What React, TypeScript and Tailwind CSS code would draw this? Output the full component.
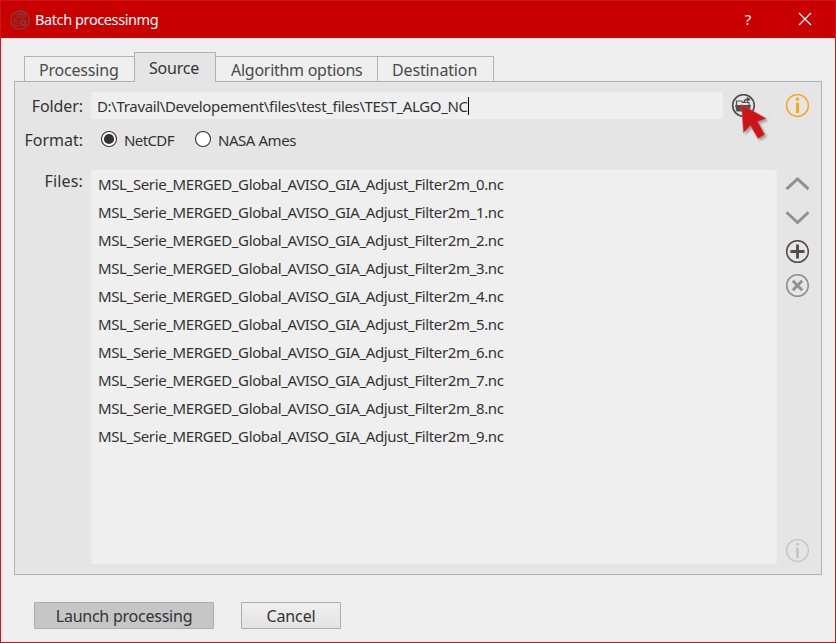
import React from "react";

const files = Array.from({ length: 10 }, (_, i) => `MSL_Serie_MERGED_Global_AVISO_GIA_Adjust_Filter2m_${i}.nc`);

function AppLogo() {
  return (
    <svg width="20" height="20" viewBox="0 0 20 20" fill="none" stroke="#774040" strokeWidth="1">
      <circle cx="10" cy="10" r="9.3" strokeWidth="1.4" />
      <path d="M10 15.500H4.500V9L6.500 7H11.500V9M7 6.500V4.500H13.500V8M9 4V2.800H15V8M6.500 9.500H4.500M6.500 11.500H9M6.500 13.500H8.500" />
      <circle cx="13" cy="12.500" r="2.300" strokeWidth="1.800" />
      <path d="M13 9V10M13 15V16M9.500 12.500H10.500M15.500 12.500H16.500M10.500 10L11.300 10.800M14.700 14.200L15.500 15M15.500 10L14.700 10.800M10.500 15L11.300 14.200" />
    </svg>
  );
}

function InfoIcon({ color }: { color: string }) {
  return (
    <svg className="block" width="24" height="24" viewBox="0 0 24 24">
      <circle cx="12.500" cy="11.500" r="10.900" fill="none" stroke={color} strokeWidth="1.500" />
      <circle cx="12.500" cy="5.200" r="1.600" fill={color} />
      <path d="M11 8.700H14V19H11Z" fill={color} />
    </svg>
  );
}

function FolderIcon() {
  return (
    <svg className="block" width="24" height="24" viewBox="0 0 24 24">
      <circle cx="12.500" cy="11.500" r="10.800" fill="none" stroke="#505050" strokeWidth="1.700" />
      <path d="M5.500 11V7H10.500L11.500 8.500H18V11" fill="none" stroke="#505050" strokeWidth="1.200" />
      <path d="M4 11H20L18.500 17.500H5.500Z" fill="#505050" />
      <path d="M13 8C13.500 6 15 5.300 17 5.300M15.800 3.500L18.300 5.300L16 7.500" fill="none" stroke="#505050" strokeWidth="1.500" />
    </svg>
  );
}

function Pointer() {
  return (
    <svg className="absolute left-[10px] top-[10px] drop-shadow-[2px_2px_1px_rgba(0,0,0,0.3)]" width="30" height="40" viewBox="0 0 30 40">
      <path d="M0.500 0.500L25 14.500L16.500 17.500L23.500 30.500L17 34.500L9.500 21.500L2.500 28.500Z" fill="#cb1517" stroke="#d84b4b" strokeWidth="0.6" />
    </svg>
  );
}

function Chevron({ up }: { up?: boolean }) {
  return (
    <svg className="block" width="24" height="14" viewBox="0 0 24 14">
      <path d={up ? "M1.500 12.100L12.500 1.900L23.500 12.100" : "M1.500 1.200L12.500 11.500L23.500 1.200"} fill="none" stroke="#909090" strokeWidth="2.900" />
    </svg>
  );
}

function RoundAction({ remove }: { remove?: boolean }) {
  const c = remove ? "#909090" : "#514d4d";
  return (
    <svg className="block" width="24" height="24" viewBox="0 0 24 24" fill="none" stroke={c}>
      <circle cx="12.500" cy="11.500" r="10.800" strokeWidth="1.600" />
      <path d={remove ? "M7.800 6.800L17.200 16.200M17.200 6.800L7.800 16.200" : "M12.500 4.500V18.500M5.500 11.500H19.500"} strokeWidth="2.900" />
    </svg>
  );
}

function Radio({ checked }: { checked?: boolean }) {
  return (
    <svg className="block shrink-0" width="17" height="17" viewBox="0 0 17 17">
      <circle cx="8" cy="8" r="7.500" fill="#fff" stroke="#333" strokeWidth="1.100" />
      {checked && <circle cx="8" cy="8" r="5.100" fill="#333" />}
    </svg>
  );
}

export default function App() {
  return (
    <div className="flex h-[643px] w-[836px] flex-col overflow-hidden border border-[#cd1518] bg-[#efefef] font-['Noto_Sans',sans-serif] text-[16px] leading-[20px] whitespace-nowrap text-[#333]">
      <header className="flex h-[37px] shrink-0 items-center bg-[#c80000] pl-[9px] text-white">
        <AppLogo />
        <span className="ml-[5px] pb-[2px] text-[14.5px] tracking-[-0.4px]">Batch processinmg</span>
        <span className="ml-auto w-[10px] pb-[2px] text-center text-[15px]">?</span>
        <svg className="mr-[23px] mb-px ml-[45px]" width="14" height="14" viewBox="0 0 14 14">
          <path d="M1 1L13 13M13 1L1 13" stroke="#fff" strokeWidth="1.200" />
        </svg>
      </header>

      <main className="mt-[14px] ml-[13px] w-[808px]">
        <nav className="relative z-10 -mb-px flex h-[30px] items-end pl-[10px] text-[#4a4a4a]">
          <div className="flex h-[26px] w-[111px] items-center border border-[#b2b2b2] pt-[2px] pl-[14px]"><span className="tracking-[-0.2px]">Processing</span></div>
          <div className="-ml-px flex h-[30px] w-[82px] items-center border border-b-0 border-[#b2b2b2] bg-[#e5e5e5] pl-[14px] text-[#333]"><span className="tracking-[-0.2px]">Source</span></div>
          <div className="-ml-px flex h-[26px] w-[163px] items-center border border-[#b2b2b2] pt-[2px] pl-[15px]"><span className="tracking-[-0.27px]">Algorithm options</span></div>
          <div className="-ml-px flex h-[26px] w-[117px] items-center border border-[#b2b2b2] pt-[2px] pl-[14px]"><span className="tracking-[-0.13px]">Destination</span></div>
        </nav>
        <section className="flex h-[494px] border border-[#b2b2b2] bg-[#e5e5e5] pt-[10px]">
          <div className="flex w-[69px] flex-col items-end pr-px">
            <span className="mt-[4px] tracking-[-0.1px]">Folder:</span>
            <span className="mt-[14px]">Format:</span>
            <span className="mt-[21px] tracking-[0.15px]">Files:</span>
          </div>
          <div className="ml-[7px] w-[686px] text-[15px]">
            <div className="flex">
              <div className="flex h-[27px] w-[632px] items-center rounded-[3px] bg-[#efefef] pl-[6px]">
                <span className="tracking-[-0.345px]">D:\Travail\Developement\files\test_files\TEST_ALGO_NC</span>
                <i className="h-[18px] w-px bg-black" />
              </div>
              <div className="relative z-20 mt-[2px] ml-[8px] size-6"><FolderIcon /><Pointer /></div>
            </div>
            <div className="mt-[12px] flex h-[17px] items-center pl-[10px]">
              <Radio checked /><span className="ml-[6px] w-[54px] pt-px tracking-[-0.6px]">NetCDF</span>
              <span className="ml-[17px]"><Radio /></span><span className="ml-[6px] pt-px tracking-[-0.45px]">NASA Ames</span>
            </div>
            <ul className="mt-[22px] h-[394px] rounded-[3px] bg-[#efefef] pl-[7px]">
              {files.map((f) => <li key={f} className="h-[28px] leading-[28px]"><span className="tracking-[-0.37px]">{f}</span></li>)}
            </ul>
          </div>
          <aside className="ml-[8px] flex flex-col items-center">
            <div className="mt-[2px]"><InfoIcon color="#f8a51c" /></div>
            <div className="mt-[59px]"><Chevron up /></div>
            <div className="mt-[20px]"><Chevron /></div>
            <div className="mt-[15px]"><RoundAction /></div>
            <div className="mt-[10px]"><RoundAction remove /></div>
            <div className="mt-[241px]"><InfoIcon color="#c7c7c7" /></div>
          </aside>
        </section>
      </main>

      <footer className="mt-[27px] ml-[33px] flex gap-[27px]">
        <button className="flex h-[27px] w-[180px] items-center justify-center rounded-[1px] border border-[#adadad] bg-[#c6c6c6]"><span className="tracking-[-0.24px]">Launch processing</span></button>
        <button className="flex h-[27px] w-[100px] items-center justify-center rounded-[1px] border border-[#adadad] bg-linear-to-b from-[#efefef] to-[#e3e3e3]"><span className="tracking-[-0.1px]">Cancel</span></button>
      </footer>
    </div>
  );
}
